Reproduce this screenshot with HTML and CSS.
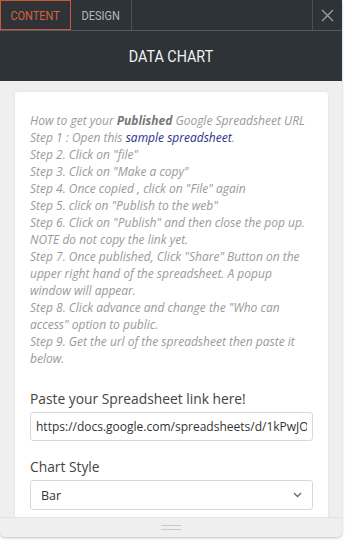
FILE: index.html
```html
<!DOCTYPE html>
<html>
<head>
<meta charset="utf-8">
<link rel="stylesheet" href="styles.css">
</head>
<body>
<div class="panel">
  <div class="tabs">
    <div class="tab active"><span class="cond">CONTENT</span></div>
    <div class="tab"><span class="cond">DESIGN</span></div>
    <div class="tab-space"></div>
    <div class="close">
      <svg width="13" height="13" viewBox="0 0 13 13"><path d="M1 1L12 12M12 1L1 12" stroke="#9aa0a6" stroke-width="1.3" fill="none"/></svg>
    </div>
  </div>
  <div class="header"><span class="cond">DATA CHART</span></div>
  <div class="body">
    <div class="card">
      <div class="help">
        How to get your <b>Published</b> Google Spreadsheet URL<br>
        Step 1 : Open this <a class="link">sample spreadsheet</a>.<br>
        Step 2. Click on "file"<br>
        Step 3. Click on "Make a copy"<br>
        Step 4. Once copied , click on "File" again<br>
        Step 5. click on "Publish to the web"<br>
        Step 6. Click on "Publish" and then close the pop up.<br>
        NOTE do not copy the link yet.<br>
        Step 7. Once published, Click "Share" Button on the<br>
        upper right hand of the spreadsheet. A popup<br>
        window will appear.<br>
        Step 8. Click advance and change the "Who can<br>
        access" option to public.<br>
        Step 9. Get the url of the spreadsheet then paste it<br>
        below.
      </div>
      <div class="field">
        <div class="label">Paste your Spreadsheet link here!</div>
        <input class="input" type="text" readonly value="https://docs.google.com/spreadsheets/d/1kPwJOAbcdEfg">
      </div>
      <div class="field">
        <div class="label">Chart Style</div>
        <div class="select"><span>Bar</span>
          <svg width="9" height="6" viewBox="0 0 9 6"><path d="M1 1L4.5 4.5L8 1" stroke="#666" stroke-width="1.3" fill="none"/></svg>
        </div>
      </div>
    </div>
  </div>
  <div class="footer"><div class="handle"></div></div>
</div>
</body>
</html>
```
FILE: styles.css
```css
html, body { margin: 0; padding: 0; }
body { width: 345px; height: 541px; background: #fff; overflow: hidden; }
.panel {
  width: 342px;
  height: 537px;
  background: #efefef;
  display: flex;
  flex-direction: column;
  border-radius: 0 0 5px 5px;
  box-shadow: 0 1px 3px rgba(0,0,0,0.25);
  overflow: hidden;
}
.cond { display: inline-block; transform: scaleX(0.88); }
.tabs {
  height: 30px;
  display: flex;
  background: #2e3338;
  border-bottom: 1px solid #555b61;
  flex-shrink: 0;
}
.tab {
  font-family: Roboto, sans-serif;
  font-size: 12.5px;
  color: #b5b9bd;
  display: flex;
  align-items: center;
  justify-content: center;
  width: 60px;
  border-right: 1px solid #4a5056;
}
.tab.active {
  width: 69px;
  color: #d2643f;
  border: 1px solid #c9583a;
  background: #2f3236;
}
.tab-space { flex: 1; }
.close {
  width: 29px;
  border-left: 1px solid #4a5056;
  display: flex;
  align-items: center;
  justify-content: center;
}
.header {
  height: 49px;
  flex-shrink: 0;
  background: #2e3338;
  color: #f2f2f2;
  font-family: Roboto, sans-serif;
  font-size: 16.3px;
  display: flex;
  align-items: center;
  justify-content: center;
  padding-top: 1px;
}
.body {
  flex: 1;
  overflow: hidden;
  padding: 11px 14px 0 15px;
}
.card {
  background: #fff;
  border-radius: 3px 3px 0 0;
  box-shadow: 0 0 3px rgba(0,0,0,0.08);
  padding: 20px 15px 20px 15px;
  height: 100%;
  box-sizing: border-box;
}
.help {
  font-family: "Open Sans", sans-serif;
  font-style: italic;
  font-size: 12px;
  line-height: 17px;
  color: #9a9a9a;
  white-space: nowrap;
}
.help b { color: #777; font-weight: 700; }
.link { color: #2d2f8a; }
.field { margin-top: 23px; }
.field + .field { margin-top: 17px; }
.label {
  font-family: "Open Sans", sans-serif;
  font-size: 13.8px;
  color: #444;
  line-height: 18px;
  margin-bottom: 4px;
}
.input {
  display: block;
  width: 100%;
  height: 29px;
  margin: 0;
  border: 1px solid #d8d8d8;
  border-radius: 3px;
  box-sizing: border-box;
  padding: 0 5px;
  font-family: "Open Sans", sans-serif;
  font-size: 12px;
  color: #333;
  background: #fff;
  outline: none;
}
.select {
  height: 30px;
  border: 1px solid #d8d8d8;
  border-radius: 3px;
  box-sizing: border-box;
  padding: 0 10px;
  font-family: "Open Sans", sans-serif;
  font-size: 12.5px;
  color: #333;
  display: flex;
  align-items: center;
  justify-content: space-between;
}
.footer {
  height: 19px;
  flex-shrink: 0;
  display: flex;
  align-items: center;
  justify-content: center;
  border-top: 1px solid #e2e2e2;
}
.handle {
  width: 20px;
  height: 3px;
  border-top: 1px solid #c8c8c8;
  border-bottom: 1px solid #c8c8c8;
}
```
